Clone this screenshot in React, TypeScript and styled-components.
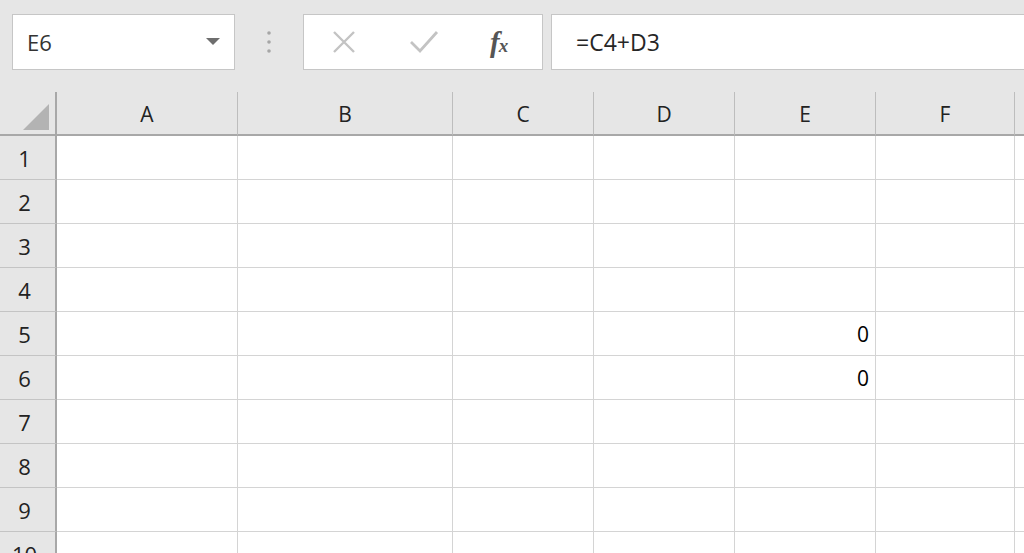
import React from 'react';
import styled, { createGlobalStyle } from 'styled-components';

const GlobalStyle = createGlobalStyle`
  html, body {
    margin: 0;
    padding: 0;
    background: #e6e6e6;
    overflow: hidden;
  }
  body {
    font-family: "Open Sans", "Noto Sans", "Liberation Sans", sans-serif;
    color: #262626;
  }
`;

const COLUMNS = [
  { name: 'A', width: 181 },
  { name: 'B', width: 215 },
  { name: 'C', width: 141 },
  { name: 'D', width: 141 },
  { name: 'E', width: 141 },
  { name: 'F', width: 139 },
  { name: 'G', width: 140 },
];

const ROWS = [1, 2, 3, 4, 5, 6, 7, 8, 9, 10];

const VALUES: Record<string, string> = {
  E5: '0',
  E6: '0',
};

const Page = styled.div`
  width: 1024px;
  height: 553px;
  overflow: hidden;
  background: #e6e6e6;
`;

const FormulaBar = styled.div`
  display: flex;
  align-items: flex-start;
  height: 92px;
  padding: 14px 0 0 12px;
  box-sizing: border-box;
`;

const NameBox = styled.div`
  width: 223px;
  height: 56px;
  box-sizing: border-box;
  border: 1px solid #c6c6c6;
  background: #fff;
  display: flex;
  align-items: center;
  justify-content: space-between;
  padding: 0 14px 0 14px;
  font-size: 22px;
  color: #333;
`;

const Grip = styled.div`
  width: 68px;
  height: 56px;
  display: flex;
  align-items: center;
  justify-content: center;
`;

const ButtonBox = styled.div`
  width: 240px;
  height: 56px;
  box-sizing: border-box;
  border: 1px solid #c6c6c6;
  background: #fff;
  display: flex;
  align-items: center;
  padding-left: 27px;
`;

const IconSlot = styled.div<{ $w: number }>`
  width: ${p => p.$w}px;
  display: flex;
  align-items: center;
`;

const Fx = styled.span`
  font-family: "Liberation Serif", "DejaVu Serif", serif;
  font-style: italic;
  font-weight: bold;
  font-size: 29px;
  color: #555;
  letter-spacing: -1px;
  & small {
    font-size: 19px;
    font-weight: bold;
  }
`;

const FormulaInput = styled.div`
  margin-left: 8px;
  flex: 1;
  height: 56px;
  box-sizing: border-box;
  border: 1px solid #c6c6c6;
  border-right: none;
  background: #fff;
  display: flex;
  align-items: center;
  padding-left: 24px;
  font-size: 23px;
  color: #262626;
`;

const Sheet = styled.div`
  display: grid;
  grid-template-columns: 57px ${COLUMNS.map(c => `${c.width}px`).join(' ')};
  grid-template-rows: 44px repeat(${ROWS.length}, 44px);
  background: #fff;
`;

const Corner = styled.div`
  background: #e6e6e6;
  border-right: 2px solid #a8a8a8;
  border-bottom: 2px solid #a8a8a8;
  box-sizing: border-box;
  display: flex;
  align-items: flex-end;
  justify-content: flex-end;
  padding: 0 6px 4px 0;
`;

const ColHeader = styled.div`
  background: #e6e6e6;
  border-bottom: 2px solid #a8a8a8;
  border-right: 1px solid #bdbdbd;
  box-sizing: border-box;
  display: flex;
  align-items: center;
  justify-content: center;
  font-size: 21px;
  color: #222;
  padding-top: 2px;
`;

const RowHeader = styled.div`
  background: #e6e6e6;
  border-right: 2px solid #a8a8a8;
  border-bottom: 1px solid #c4c4c4;
  box-sizing: border-box;
  display: flex;
  align-items: center;
  justify-content: center;
  padding-right: 6px;
  font-size: 22px;
  color: #222;
`;

const Cell = styled.div`
  border-right: 1px solid #d4d4d4;
  border-bottom: 1px solid #d4d4d4;
  box-sizing: border-box;
  display: flex;
  align-items: center;
  justify-content: flex-end;
  padding-right: 6px;
  font-family: "Open Sans", "Liberation Sans", sans-serif;
  font-size: 21px;
  color: #000;
`;

const Dots = () => (
  <svg width="6" height="24" viewBox="0 0 6 24">
    <circle cx="3" cy="3" r="1.8" fill="#a6a6a6" />
    <circle cx="3" cy="12" r="1.8" fill="#a6a6a6" />
    <circle cx="3" cy="21" r="1.8" fill="#a6a6a6" />
  </svg>
);

export default function App() {
  return (
    <Page>
      <GlobalStyle />
      <FormulaBar>
        <NameBox>
          <span>E6</span>
          <svg width="14" height="8" viewBox="0 0 14 8">
            <path d="M0 0 L14 0 L7 7 Z" fill="#6e6e6e" />
          </svg>
        </NameBox>
        <Grip>
          <Dots />
        </Grip>
        <ButtonBox>
          <IconSlot $w={78}>
            <svg width="26" height="26" viewBox="0 0 26 26">
              <path d="M3 3 L23 23 M23 3 L3 23" stroke="#c3c3c3" strokeWidth="2.4" />
            </svg>
          </IconSlot>
          <IconSlot $w={81}>
            <svg width="30" height="26" viewBox="0 0 30 26">
              <path d="M2 13 L11 22 L28 3" stroke="#c3c3c3" strokeWidth="2.8" fill="none" />
            </svg>
          </IconSlot>
          <IconSlot $w={40}>
            <Fx>f<small>x</small></Fx>
          </IconSlot>
        </ButtonBox>
        <FormulaInput>=C4+D3</FormulaInput>
      </FormulaBar>
      <Sheet>
        <Corner>
          <svg width="26" height="26" viewBox="0 0 26 26">
            <path d="M26 0 L26 26 L0 26 Z" fill="#b3b3b3" />
          </svg>
        </Corner>
        {COLUMNS.map(c => (
          <ColHeader key={c.name}>{c.name}</ColHeader>
        ))}
        {ROWS.map(r => (
          <React.Fragment key={r}>
            <RowHeader>{r}</RowHeader>
            {COLUMNS.map(c => (
              <Cell key={c.name}>{VALUES[`${c.name}${r}`] ?? ''}</Cell>
            ))}
          </React.Fragment>
        ))}
      </Sheet>
    </Page>
  );
}
